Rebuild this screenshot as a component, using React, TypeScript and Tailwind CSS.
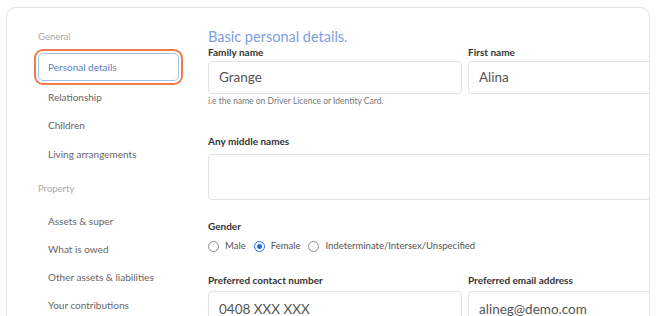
import React from "react";

// -----------------------------------------------------------------------------
// Data
// -----------------------------------------------------------------------------

const generalItems = ["Personal details", "Relationship", "Children", "Living arrangements"];
const propertyItems = ["Assets & super", "What is owed", "Other assets & liabilities", "Your contributions"];

const font = { fontFamily: "Lato, 'Open Sans', sans-serif" };

// -----------------------------------------------------------------------------
// Pieces
// -----------------------------------------------------------------------------

function Label({ children, className = "" }: { children: React.ReactNode; className?: string }) {
  return (
    <div className={`text-[10px] leading-[13px] font-bold text-[#333] ${className}`}>{children}</div>
  );
}

function Field({ value, className = "" }: { value?: string; className?: string }) {
  return (
    <div
      className={`flex items-center rounded-[4px] border border-[#e2e2e2] px-[10px] text-[13.5px] text-[#555] ${className}`}
    >
      {value}
    </div>
  );
}

function Radio({ label, checked = false }: { label: string; checked?: boolean }) {
  return (
    <div className="flex items-center gap-[6px]">
      {checked ? (
        <span className="flex h-[11px] w-[11px] items-center justify-center rounded-full border-[1.5px] border-[#1a73e8]">
          <span className="h-[5px] w-[5px] rounded-full bg-[#1a73e8]" />
        </span>
      ) : (
        <span className="h-[11px] w-[11px] rounded-full border border-[#8a8a8a]" />
      )}
      <span className="text-[9.5px] text-[#555]">{label}</span>
    </div>
  );
}

// -----------------------------------------------------------------------------
// App
// -----------------------------------------------------------------------------

export default function App() {
  return (
    <div className="h-[316px] w-[659px] overflow-hidden bg-white pl-[6px] pt-[7px]" style={font}>
      <div className="flex h-[360px] w-[644px] overflow-hidden rounded-[10px] border border-[#e4e4e4]">
        {/* Sidebar */}
        <div className="w-[201px] shrink-0 pl-[31px] pt-[23px]">
          <div className="text-[9.5px] leading-[12px] text-[#aaa]">General</div>
          <div className="mt-[10px] w-[141px]">
            <div className="flex h-[28px] items-center rounded-[5px] border border-[#a9c0e6] pl-[9px] text-[10px] text-[#5a80c2] outline-2 outline-offset-[2px] outline-[#ef7a4c]">
              Personal details
            </div>
            <div className="mt-[2px]">
              {generalItems.slice(1).map((item) => (
                <div key={item} className="flex h-[28.5px] items-center pl-[10px] text-[10px] text-[#666]">
                  {item}
                </div>
              ))}
            </div>
          </div>
          <div className="mt-[14.5px] text-[9.5px] leading-[12px] text-[#aaa]">Property</div>
          <div className="mt-[12px] w-[141px]">
            {propertyItems.map((item) => (
              <div key={item} className="flex h-[28px] items-center pl-[10px] text-[10px] text-[#666]">
                {item}
              </div>
            ))}
          </div>
        </div>

        {/* Main form */}
        <div className="flex-1 pt-[21px]">
          <h2 className="text-[14.5px] leading-[16px] text-[#7aa0e3]">Basic personal details.</h2>

          <div className="mt-[0.5px] grid grid-cols-[254px_254px] gap-x-[6px]">
            <div>
              <Label className="mb-[2px]">Family name</Label>
              <Field value="Grange" className="h-[33px]" />
              <div className="mt-[2px] text-[8.5px] leading-[11px] text-[#777]">
                i.e the name on Driver Licence or Identity Card.
              </div>
            </div>
            <div>
              <Label className="mb-[2px]">First name</Label>
              <Field value="Alina" className="h-[33px]" />
            </div>
          </div>

          <Label className="mt-[28px]">Any middle names</Label>
          <Field className="mt-[6px] h-[46px] w-[514px]" />

          <Label className="mt-[20.5px]">Gender</Label>
          <div className="mt-[6.5px] flex h-[14px] items-center gap-[8px]">
            <Radio label="Male" />
            <Radio label="Female" checked />
            <Radio label="Indeterminate/Intersex/Unspecified" />
          </div>

          <div className="mt-[20.5px] grid grid-cols-[254px_254px] gap-x-[6px]">
            <div>
              <Label className="mb-[4px]">Preferred contact number</Label>
              <Field value="0408 XXX XXX" className="h-[36px]" />
            </div>
            <div>
              <Label className="mb-[4px]">Preferred email address</Label>
              <Field value="alineg@demo.com" className="h-[36px]" />
            </div>
          </div>
        </div>
      </div>
    </div>
  );
}
